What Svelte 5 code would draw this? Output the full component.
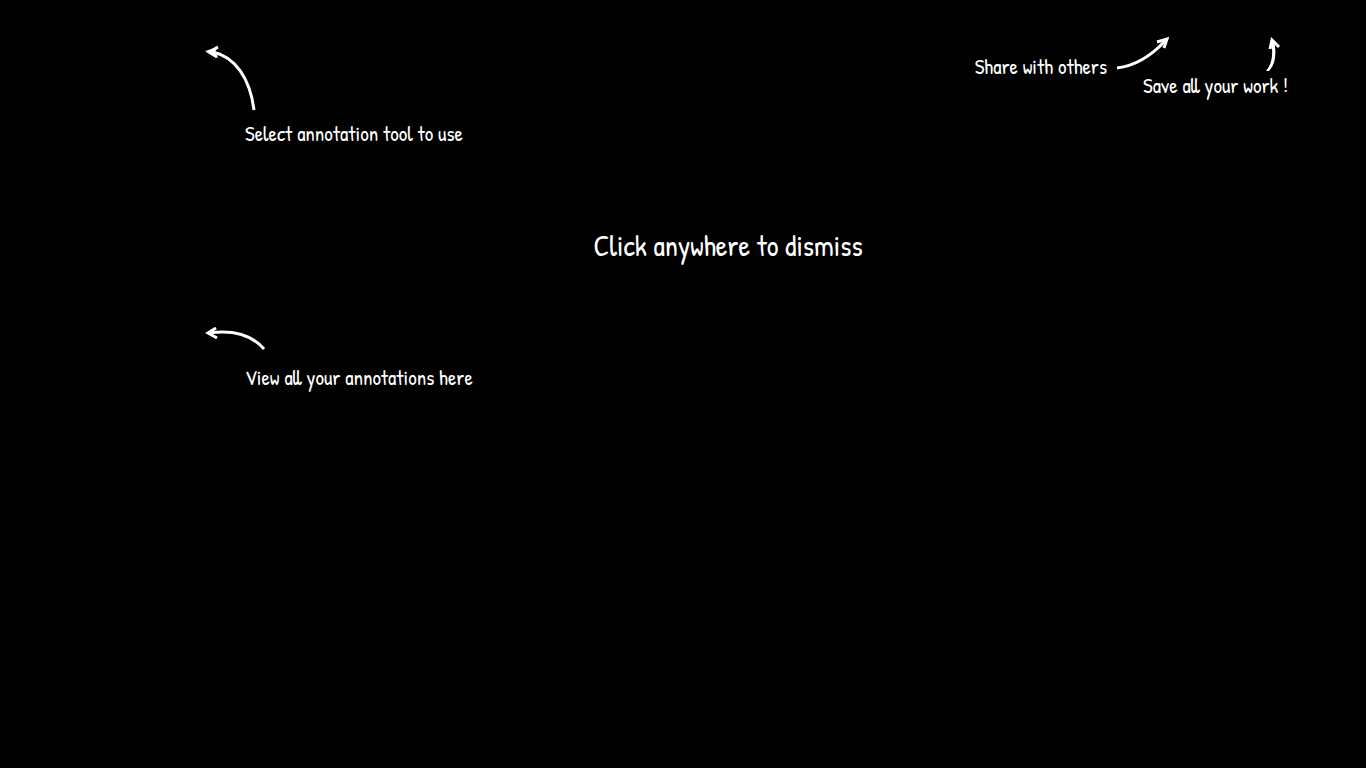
<script>
  let open = $state(true);
</script>

{#if open}
  <button class="overlay" type="button" onclick={() => (open = false)}>
    <span class="top">
      <span class="hint tools">
        <svg width="52" height="68" viewBox="0 0 52 68" aria-hidden="true">
          <path d="M8 8C30 13 45 34 49 66" stroke-width="3" />
          <path d="M13 3L4 8L12 13" stroke-width="3" />
          <path class="head" d="M0 7L13 3L10 8L13 14Z" />
        </svg>
        <span class="label">Select annotation tool to use</span>
      </span>
      <span class="actions">
        <span class="hint share">
          <span class="label">Share with others</span>
          <svg width="54" height="34" viewBox="0 0 54 34" aria-hidden="true">
            <path d="M1 32C18 30 35 20 49 5" stroke-width="3" />
            <path d="M41 6L51 3L48 12" stroke-width="3" />
          </svg>
        </span>
        <span class="hint save">
          <svg width="16" height="36" viewBox="0 0 16 36" aria-hidden="true">
            <path class="head" d="M6 4L9 5C12 18 10 29 4 35L1 35C8 27 8 16 6 4Z" />
            <path d="M5 13L7 4L14 11" stroke-width="3" />
          </svg>
          <span class="label">Save all your work !</span>
        </span>
      </span>
    </span>
    <span class="dismiss">Click anywhere to dismiss</span>
    <span class="hint list">
      <svg width="62" height="26" viewBox="0 0 62 26" aria-hidden="true">
        <path d="M4 9C26 6 46 10 59 25" stroke-width="3" />
        <path d="M11 4L3 9L12 14" stroke-width="3" />
      </svg>
      <span class="label">View all your annotations here</span>
    </span>
  </button>
{/if}

<style>
  :global(body) {
    background: #000;
  }
  .overlay {
    display: flex;
    flex-direction: column;
    box-sizing: border-box;
    width: 100%;
    min-height: 100vh;
    margin: 0;
    padding: 36px 0 0;
    border: 0;
    background: #000;
    color: #fff;
    font-family: "Patrick Hand", Lato, sans-serif;
    font-size: 21px;
    font-weight: 500;
    line-height: 24px;
    text-align: left;
    cursor: pointer;
  }
  svg {
    display: block;
    flex: none;
    fill: none;
    stroke: #fff;
  }
  .head {
    fill: #fff;
    stroke: none;
  }
  .top {
    display: flex;
    justify-content: space-between;
    align-items: flex-start;
    padding: 0 67px 0 205px;
  }
  .hint {
    display: flex;
    white-space: nowrap;
  }
  .tools,
  .list,
  .save {
    flex-direction: column;
  }
  .tools {
    padding-top: 8px;
    gap: 10px;
  }
  .tools .label,
  .list .label {
    margin-left: 40px;
  }
  .actions {
    display: flex;
    align-items: flex-start;
  }
  .share {
    gap: 9px;
  }
  .share .label {
    padding-top: 19px;
  }
  .save {
    gap: 2px;
    min-width: 156px;
    margin-left: -27px;
  }
  .save svg {
    margin-left: 122px;
  }
  .dismiss {
    padding: 84px 0 0 90px;
    font-size: 29px;
    line-height: 32px;
    text-align: center;
  }
  .list {
    padding: 62px 0 0 205px;
    gap: 16px;
  }
</style>
